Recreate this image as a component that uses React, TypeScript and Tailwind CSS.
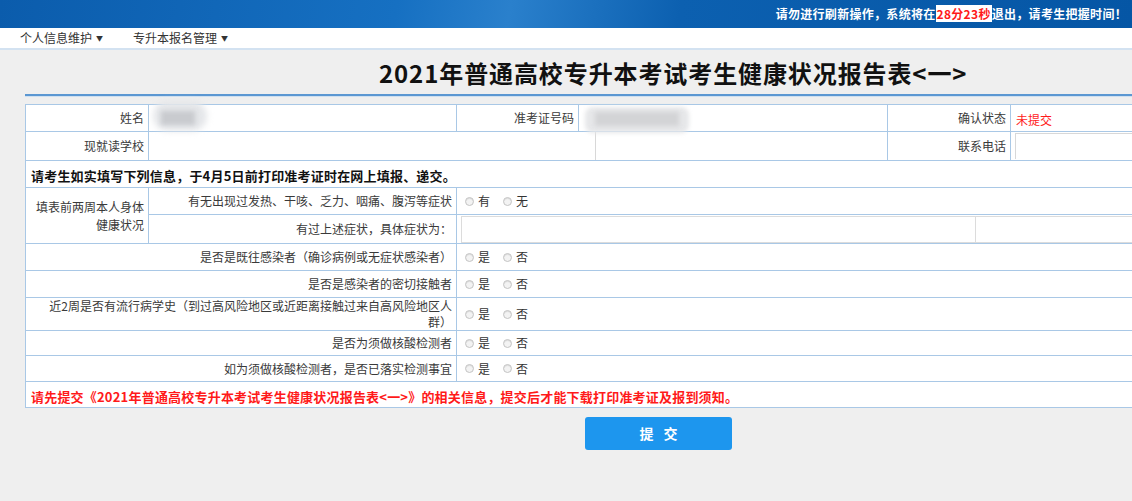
import React from "react";

const font = { fontFamily: '"Noto Sans CJK SC", "Liberation Sans", sans-serif' };

const Radio = ({ label }: { label: string }) => (
  <span className="inline-flex items-center mr-[13px]">
    <span className="w-[9px] h-[9px] rounded-full border border-[#c4c4c4] bg-[#f3f3f3] shadow-[inset_0_1px_1px_rgba(0,0,0,0.1)]" />
    <span className="ml-[4px] text-[12px] text-[#333]">{label}</span>
  </span>
);

const RadioPair = ({ a, b }: { a: string; b: string }) => (
  <div className="flex items-center pl-[8px]">
    <Radio label={a} />
    <Radio label={b} />
  </div>
);

const Label = ({ children }: { children: React.ReactNode }) => (
  <span className="block text-right pr-[4px] text-[12px] text-[#3a3a3a] leading-[16px]">
    {children}
  </span>
);

const questions: { q: React.ReactNode; h: string }[] = [
  { q: "是否是既往感染者（确诊病例或无症状感染者）", h: "h-[27px]" },
  { q: "是否是感染者的密切接触者", h: "h-[27px]" },
  {
    q: (
      <>
        近2周是否有流行病学史（到过高风险地区或近距离接触过来自高风险地区人
        <br />
        群）
      </>
    ),
    h: "h-[33px]",
  },
  { q: "是否为须做核酸检测者", h: "h-[25px]" },
  { q: "如为须做核酸检测者，是否已落实检测事宜", h: "h-[26px]" },
];

const cell = "border border-[#a9c8e6] p-0 align-middle";

export default function App() {
  return (
    <div className="w-[1132px] h-[501px] overflow-hidden bg-[#efefef]" style={font}>
      {/* top bar */}
      <div className="h-[28px] bg-[linear-gradient(100deg,#0b5cac_0%,#1670c2_35%,#2a80cc_45%,#0c60b0_60%,#0556a5_100%)] flex items-center justify-end pr-[5px]">
        <span className="text-[12px] font-bold text-white tracking-[0.3px]">
          请勿进行刷新操作，系统将在
          <span className="bg-white text-[#ff1a1a] px-[1px]">28分23秒</span>
          退出，请考生把握时间！
        </span>
      </div>

      {/* nav */}
      <div className="h-[22px] bg-white border-b-2 border-[#d3e2f1] flex items-center text-[12px] text-[#333]">
        <span className="ml-[20px] flex items-center">
          个人信息维护
          <span className="ml-[4px] text-[7px]">▼</span>
        </span>
        <span className="ml-[30px] flex items-center">
          专升本报名管理
          <span className="ml-[4px] text-[7px]">▼</span>
        </span>
      </div>

      {/* title */}
      <div className="h-[44px] flex items-center pl-[379px] pt-[2px]">
        <h1 className="text-[24px] font-bold text-[#111] tracking-[0.9px]">
          2021年普通高校专升本考试考生健康状况报告表&lt;一&gt;
        </h1>
      </div>
      <div className="ml-[25px] h-[2px] bg-[#5b97d2]" />
      <div className="ml-[25px] h-[1px] bg-[#cfe0f0]" />

      {/* form table */}
      <table className="ml-[25px] mt-[7px] w-[1110px] table-fixed border-collapse bg-white">
        <colgroup>
          <col className="w-[123px]" />
          <col className="w-[308px]" />
          <col className="w-[122px]" />
          <col className="w-[309px]" />
          <col className="w-[123px]" />
          <col />
        </colgroup>
        <tbody>
          <tr className="h-[27px]">
            <td className={cell}>
              <Label>姓名</Label>
            </td>
            <td className={cell + " relative overflow-visible"}>
              <div className="absolute left-[4px] top-[-4px] w-[54px] h-[30px] bg-[#e4e6e9] rounded-full blur-[3px]" />
              <div className="absolute left-[12px] top-[6px] w-[34px] h-[14px] bg-[#c9cbcf] blur-[2px]" />
            </td>
            <td className={cell}>
              <Label>准考证号码</Label>
            </td>
            <td className={cell + " relative"}>
              <div className="absolute left-[6px] top-[2px] w-[104px] h-[26px] bg-[#e6e7e9] rounded-[8px] blur-[2px]" />
              <div className="absolute left-[16px] top-[7px] w-[84px] h-[14px] bg-[#d3d4d6] blur-[2px]" />
            </td>
            <td className={cell}>
              <Label>确认状态</Label>
            </td>
            <td className={cell}>
              <span className="pl-[5px] text-[12px] text-[#ff1a1a]">未提交</span>
            </td>
          </tr>
          <tr className="h-[28px]">
            <td className={cell}>
              <Label>现就读学校</Label>
            </td>
            <td className={cell} colSpan={3}>
              <div className="ml-[446px] h-[28px] border-l border-[#d8d8d8]" />
            </td>
            <td className={cell}>
              <Label>联系电话</Label>
            </td>
            <td className={cell}>
              <div className="ml-[4px] h-[26px] border-l border-t border-[#d8d8d8]" />
            </td>
          </tr>
          <tr className="h-[27px]">
            <td className={cell + " pl-[5px]"} colSpan={6}>
              <span className="text-[13px] font-bold text-[#111] tracking-[0.2px]">
                请考生如实填写下列信息，于4月5日前打印准考证时在网上填报、递交。
              </span>
            </td>
          </tr>
          <tr className="h-[27px]">
            <td className={cell} rowSpan={2}>
              <span className="block text-right pr-[4px] text-[12px] text-[#3a3a3a] leading-[18px]">
                填表前两周本人身体健康状况
              </span>
            </td>
            <td className={cell}>
              <Label>有无出现过发热、干咳、乏力、咽痛、腹泻等症状</Label>
            </td>
            <td className={cell} colSpan={4}>
              <RadioPair a="有" b="无" />
            </td>
          </tr>
          <tr className="h-[29px]">
            <td className={cell}>
              <Label>有过上述症状，具体症状为：</Label>
            </td>
            <td className={cell} colSpan={4}>
              <div className="flex h-[28px] pl-[4px] pt-[1px]">
                <div className="w-[515px] border border-[#dcdcdc] bg-white" />
                <div className="flex-1 border border-l-0 border-[#dcdcdc] bg-white" />
              </div>
            </td>
          </tr>
          {questions.map((x, i) => (
            <tr key={i} className={x.h}>
              <td className={cell} colSpan={2}>
                <Label>{x.q}</Label>
              </td>
              <td className={cell} colSpan={4}>
                <RadioPair a="是" b="否" />
              </td>
            </tr>
          ))}
          <tr className="h-[26px]">
            <td className={cell + " pl-[5px]"} colSpan={6}>
              <span className="text-[13px] font-bold text-[#ff1a1a] tracking-[0.2px]">
                请先提交《2021年普通高校专升本考试考生健康状况报告表&lt;一&gt;》的相关信息，提交后才能下载打印准考证及报到须知。
              </span>
            </td>
          </tr>
        </tbody>
      </table>

      <div className="mt-[9px] ml-[585px]">
        <button className="w-[147px] h-[33px] rounded-[3px] bg-[#1d96ee] text-white text-[14px] font-bold tracking-[10px] pl-[10px]">
          提交
        </button>
      </div>
    </div>
  );
}
